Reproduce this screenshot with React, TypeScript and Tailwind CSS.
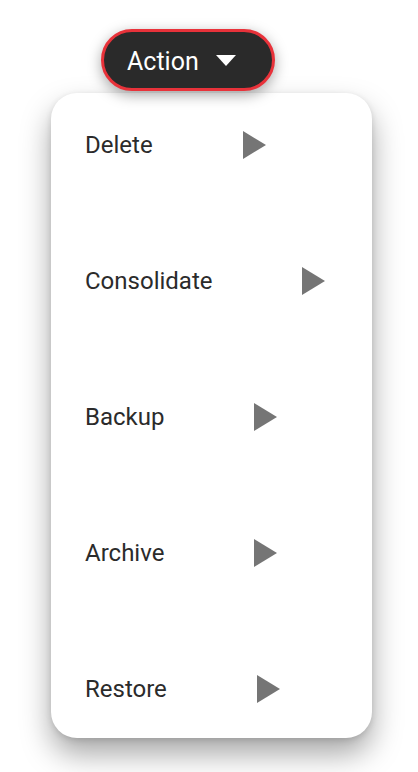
import React from "react";

const ITEMS = ["Delete", "Consolidate", "Backup", "Archive", "Restore"];

function RightTri() {
  return (
    <svg width="24" height="28" viewBox="0 0 24 28" className="shrink-0">
      <polygon points="0,0 23,14 0,28" fill="#757575" />
    </svg>
  );
}

export default function App() {
  return (
    <div
      className="w-[418px] h-[772px] bg-white overflow-hidden"
      style={{ fontFamily: "Roboto, 'Liberation Sans', sans-serif" }}
    >
      <div className="pt-[29px] flex flex-col">
        {/* trigger */}
        <button className="relative z-10 ml-[101px] w-[174px] h-[62px] rounded-full bg-[#2a2a2a] border-[3px] border-[#e8323a] shadow-[0_4px_14px_rgba(0,0,0,0.35)] flex items-center pl-[23px] pt-[3px] text-white text-[25px]">
          <span>Action</span>
          <svg width="20" height="11" viewBox="0 0 20 11" className="ml-[17px] -mt-[3px]">
            <polygon points="0,0 20,0 10,11" fill="#ffffff" />
          </svg>
        </button>

        {/* menu */}
        <div className="mt-[2px] ml-[51px] w-[321px] rounded-[26px] bg-white shadow-[0_16px_30px_rgba(0,0,0,0.35),0_2px_6px_rgba(0,0,0,0.12)] pt-[36px] pb-[33px] flex flex-col gap-[104px]">
          {ITEMS.map((label) => (
            <div key={label} className="h-[32px] flex items-center pl-[34px]">
              <span className="text-[24px] text-[#2b2b2b] leading-none">{label}</span>
              <div className="ml-[90px]">
                <RightTri />
              </div>
            </div>
          ))}
        </div>
      </div>
    </div>
  );
}
